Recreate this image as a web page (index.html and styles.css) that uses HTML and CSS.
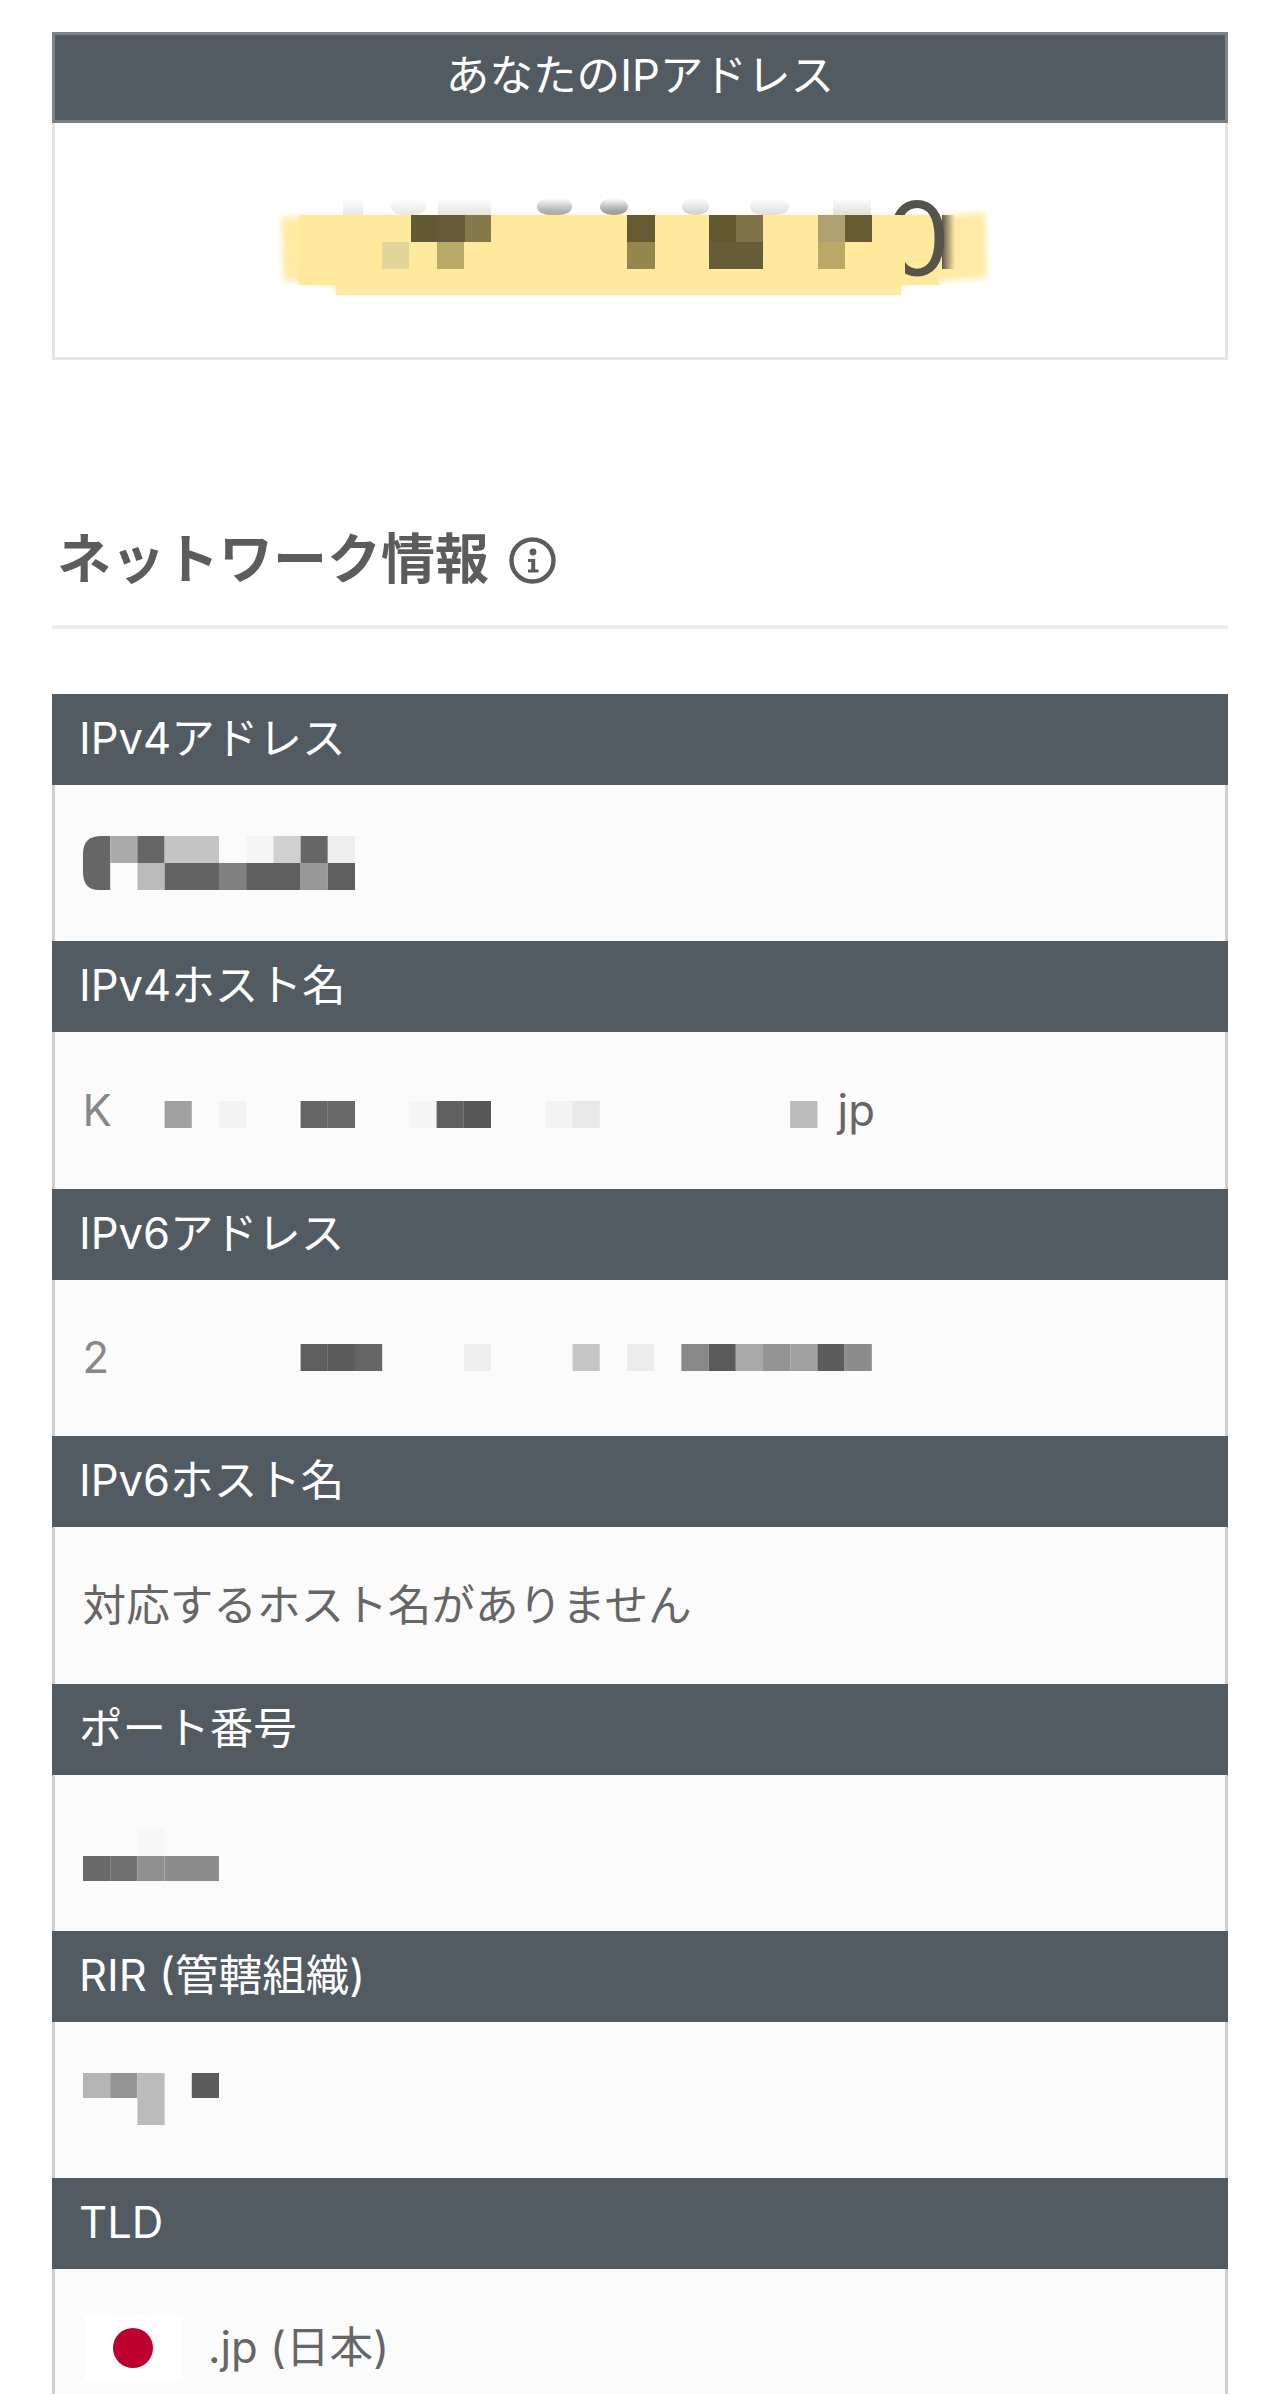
FILE: index.html
```html
<!DOCTYPE html>
<html lang="ja">
<head>
<meta charset="utf-8">
<title>あなたのIPアドレス</title>
<link rel="stylesheet" href="styles.css">
</head>
<body>
<main class="page">
  <section class="ip-card">
    <h1 class="ip-card-title">あなたのIPアドレス</h1>
    <div class="ip-card-body">
      <svg class="ip-mask" width="715" height="98" viewBox="274 198 715 98" aria-hidden="true">
        <defs>
          <linearGradient id="fade" x1="0" y1="0" x2="0" y2="1">
            <stop offset="0" stop-color="#fff" stop-opacity="1"/>
            <stop offset="1" stop-color="#fff" stop-opacity="0"/>
          </linearGradient>
          <linearGradient id="smear" x1="0" y1="0" x2="1" y2="0">
            <stop offset="0" stop-color="#5c5848"/>
            <stop offset="1" stop-color="#5c5848" stop-opacity="0"/>
          </linearGradient>
          <filter id="soft" x="-5%" y="-20%" width="110%" height="140%"><feGaussianBlur stdDeviation="3"/></filter>
        </defs>
        <rect x="342" y="198" width="20" height="17" fill="#e6e6e6"/>
        <rect x="390" y="198" width="35" height="17" rx="12" fill="#e6e6e6"/>
        <rect x="437" y="198" width="53" height="17" fill="#e3e3e3"/>
        <rect x="536" y="198" width="35" height="17" rx="12" fill="#999"/>
        <rect x="599" y="198" width="28" height="17" rx="12" fill="#888"/>
        <rect x="681" y="198" width="27" height="17" rx="12" fill="#ccc"/>
        <rect x="749" y="198" width="39" height="17" rx="12" fill="#ddd"/>
        <rect x="832" y="198" width="38" height="17" fill="#ddd"/>
        <rect x="330" y="198" width="560" height="17" fill="url(#fade)"/>
        <g filter="url(#soft)" fill="#ffeaa6">
          <path d="M280 217 H930 L984 212 L986 278 L900 284 V293 H335 V286 L282 280 Z"/>
        </g>
        <rect x="298" y="215" width="640" height="70" fill="#ffe99c"/>
        <rect x="335" y="285" width="565" height="10" fill="#ffeaa5"/>
        <rect x="941" y="215" width="13" height="54" fill="url(#smear)"/>
        <text class="ip-digit" x="886" y="276">0</text>
        <rect x="298" y="215" width="606" height="70" fill="#ffe99c"/>
        <rect x="410" y="215" width="27" height="27" fill="#625a35"/>
        <rect x="437" y="215" width="27" height="27" fill="#655a3a"/>
        <rect x="464" y="215" width="26" height="27" fill="#877a4a"/>
        <rect x="381" y="242" width="27" height="27" fill="#e2d69a"/>
        <rect x="436" y="242" width="27" height="27" fill="#b8aa66"/>
        <rect x="626" y="215" width="28" height="27" fill="#655a32"/>
        <rect x="626" y="242" width="28" height="27" fill="#958650"/>
        <rect x="708" y="215" width="27" height="27" fill="#635930"/>
        <rect x="735" y="215" width="27" height="27" fill="#80734a"/>
        <rect x="708" y="242" width="54" height="27" fill="#675c38"/>
        <rect x="817" y="215" width="27" height="27" fill="#aea070"/>
        <rect x="844" y="215" width="27" height="27" fill="#6a5c32"/>
        <rect x="817" y="242" width="27" height="27" fill="#b8aa66"/>
      </svg>
    </div>
  </section>

  <h2 class="section-title">ネットワーク情報
    <svg class="info-icon" width="47" height="47" viewBox="0 0 47 47" aria-hidden="true">
      <circle cx="23.5" cy="23.5" r="21" fill="none" stroke="#5c5c5c" stroke-width="4.4"/>
      <circle cx="24" cy="15" r="3.4" fill="#5c5c5c"/>
      <path d="M19 22 H26.2 V32.5 H29.5 V35.5 H19 V32.5 H22.2 V25 H19 Z" fill="#5c5c5c"/>
    </svg>
  </h2>

  <section class="info-list">
    <div class="row">
      <h3 class="row-label">IPv4アドレス</h3>
      <div class="row-value">
        <svg class="mosaic" width="272" height="54" viewBox="0 0 272 54" aria-hidden="true">
          <path d="M27.2 0 V54 H16 Q0 54 0 36 V18 Q0 0 18 0 Z" fill="#666"/>
          <rect x="27.2" width="27.2" height="27" fill="#aaa"/>
          <rect x="54.4" width="27.2" height="27" fill="#666"/>
          <rect x="81.6" width="54.4" height="27" fill="#c4c4c4"/>
          <rect x="163.2" width="27.2" height="27" fill="#f5f5f5"/>
          <rect x="190.4" width="27.2" height="27" fill="#d0d0d0"/>
          <rect x="217.6" width="27.2" height="27" fill="#666"/>
          <rect x="244.8" width="27.2" height="27" fill="#eee"/>
          <rect x="54.4" y="27" width="27.2" height="27" fill="#bbb"/>
          <rect x="81.6" y="27" width="54.4" height="27" fill="#636363"/>
          <rect x="136" y="27" width="27.2" height="27" fill="#808080"/>
          <rect x="163.2" y="27" width="54.4" height="27" fill="#5e5e5e"/>
          <rect x="217.6" y="27" width="27.2" height="27" fill="#999"/>
          <rect x="244.8" y="27" width="27.2" height="27" fill="#5e5e5e"/>
        </svg>
      </div>
    </div>
    <div class="row">
      <h3 class="row-label">IPv4ホスト名</h3>
      <div class="row-value">
        <span class="lead lead-host">K</span>
        <svg class="mosaic mosaic-host" width="717" height="27" viewBox="38 0 717 27" aria-hidden="true">
          <rect x="81.6" width="27.2" height="27" fill="#a0a0a0"/>
          <rect x="136" width="27.2" height="27" fill="#f3f3f3"/>
          <rect x="217.6" width="27.2" height="27" fill="#666"/>
          <rect x="244.8" width="27.2" height="27" fill="#6a6a6a"/>
          <rect x="326.4" width="27.2" height="27" fill="#f5f5f5"/>
          <rect x="353.6" width="27.2" height="27" fill="#606060"/>
          <rect x="380.8" width="27.2" height="27" fill="#585858"/>
          <rect x="462.4" width="27.2" height="27" fill="#f3f3f3"/>
          <rect x="489.6" width="27.2" height="27" fill="#e8e8e8"/>
          <rect x="707.2" width="27.2" height="27" fill="#bbb"/>
        </svg>
        <span>jp</span>
      </div>
    </div>
    <div class="row">
      <h3 class="row-label">IPv6アドレス</h3>
      <div class="row-value">
        <span class="lead lead-v6">2</span>
        <svg class="mosaic" width="759" height="27" viewBox="30 0 759 27" aria-hidden="true">
          <rect x="217.6" width="27.2" height="27" fill="#5e5e5e"/>
          <rect x="244.8" width="27.2" height="27" fill="#5c5c5c"/>
          <rect x="272" width="27.2" height="27" fill="#666"/>
          <rect x="380.8" width="27.2" height="27" fill="#eee"/>
          <rect x="489.6" width="27.2" height="27" fill="#c6c6c6"/>
          <rect x="544" width="27.2" height="27" fill="#ececec"/>
          <rect x="598.4" width="27.2" height="27" fill="#888"/>
          <rect x="625.6" width="27.2" height="27" fill="#5a5a5a"/>
          <rect x="652.8" width="27.2" height="27" fill="#aaa"/>
          <rect x="680" width="27.2" height="27" fill="#949494"/>
          <rect x="707.2" width="27.2" height="27" fill="#a0a0a0"/>
          <rect x="734.4" width="27.2" height="27" fill="#5c5c5c"/>
          <rect x="761.6" width="27.2" height="27" fill="#8c8c8c"/>
        </svg>
      </div>
    </div>
    <div class="row">
      <h3 class="row-label">IPv6ホスト名</h3>
      <div class="row-value">対応するホスト名がありません</div>
    </div>
    <div class="row">
      <h3 class="row-label">ポート番号</h3>
      <div class="row-value">
        <svg class="mosaic mosaic-port" width="136" height="52" viewBox="0 0 136 52" aria-hidden="true">
          <rect x="54.4" width="27.2" height="27" fill="#f7f7f7"/>
          <rect y="27" width="27.2" height="25" fill="#6a6a6a"/>
          <rect x="27.2" y="27" width="27.2" height="25" fill="#707070"/>
          <rect x="54.4" y="27" width="27.2" height="25" fill="#8f8f8f"/>
          <rect x="81.6" y="27" width="54.4" height="25" fill="#8c8c8c"/>
        </svg>
      </div>
    </div>
    <div class="row">
      <h3 class="row-label">RIR (管轄組織)</h3>
      <div class="row-value">
        <svg class="mosaic mosaic-rir" width="136" height="52" viewBox="0 0 136 52" aria-hidden="true">
          <rect width="27.2" height="25" fill="#b5b5b5"/>
          <rect x="27.2" width="27.2" height="25" fill="#959595"/>
          <rect x="54.4" width="27.2" height="52" fill="#bbb"/>
          <rect x="108.8" width="27.2" height="25" fill="#5c5c5c"/>
        </svg>
      </div>
    </div>
    <div class="row">
      <h3 class="row-label">TLD</h3>
      <div class="row-value row-value-flag">
        <svg class="flag" width="98" height="64" viewBox="0 0 98 64" role="img" aria-label="日本の国旗">
          <rect width="98" height="64" fill="#fff"/>
          <circle cx="48" cy="32" r="20" fill="#bc002d"/>
        </svg>
        <span>.jp (日本)</span>
      </div>
    </div>
  </section>
</main>
</body>
</html>
```

FILE: styles.css
```css
html, body {
  margin: 0;
  height: 100%;
  overflow: hidden;
  background: #fff;
}

body {
  font-family: "Inter", "Noto Sans CJK JP", sans-serif;
  color: #5c5c5c;
  font-size: 43.6px;
}

.page {
  padding: 32px 52px 0;
  width: 1176px;
}

.ip-card-title {
  margin: 0;
  height: 91px;
  box-sizing: border-box;
  border: 3px solid #7d8084;
  background: #525a62;
  color: #fff;
  font-size: 43.6px;
  font-weight: 400;
  line-height: 81px;
  text-align: center;
}

.ip-card-body {
  box-sizing: border-box;
  height: 237px;
  border: 3px solid #e4e4e4;
  border-top: 0;
  display: flex;
  align-items: center;
  justify-content: center;
  padding-top: 14px;
  background: #fff;
}

.ip-mask {
  display: block;
  margin-right: 16px;
}

.ip-digit {
  font-family: "Lato", sans-serif;
  font-size: 104px;
  fill: #55534a;
}

.section-title {
  margin: 173px 0 0;
  display: flex;
  align-items: center;
  gap: 20px;
  padding-left: 5px;
  padding-bottom: 38px;
  border-bottom: 4px solid #ececec;
  font-size: 54px;
  font-weight: 700;
  color: #5c5c5c;
  line-height: 1;
}

.info-icon {
  display: block;
  flex: none;
}

.info-list {
  margin-top: 65px;
}

.row-label {
  margin: 0;
  height: 91px;
  padding-left: 27px;
  background: #525a62;
  color: #fff;
  font-size: 43.6px;
  font-weight: 400;
  line-height: 89px;
}

.row-value {
  box-sizing: border-box;
  height: 156.4px;
  display: flex;
  align-items: center;
  padding-left: 27.6px;
  background: #fbfbfb;
  border-left: 3px solid #d0d0d0;
  border-right: 3px solid #d0d0d0;
  font-size: 43.6px;
  line-height: 1;
  color: #666;
}

.mosaic {
  display: block;
  flex: none;
}

.mosaic-host {
  margin-top: 7px;
}

.mosaic-port {
  margin-top: 4px;
}

.mosaic-rir {
  margin-top: -2px;
}

.lead {
  display: block;
  flex: none;
  white-space: nowrap;
  color: #888;
}

.lead-host {
  width: 38px;
}

.lead-v6 {
  width: 30px;
}

.row-value-flag {
  gap: 25px;
  padding-left: 30px;
}

.flag {
  display: block;
  flex: none;
}
```
